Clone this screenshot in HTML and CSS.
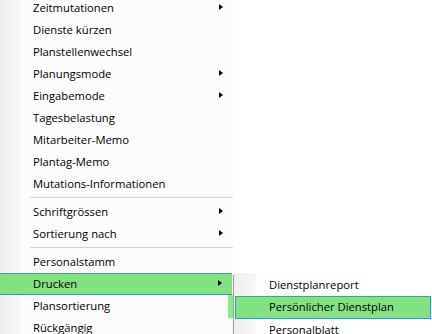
FILE: index.html
```html
<!DOCTYPE html>
<html lang="de">
<head>
    <meta charset="UTF-8">
    <title>Kontextmenü</title>
    <link rel="stylesheet" href="styles.css">
</head>
<body>
    <div class="menu">
        <div class="item has-arrow">Zeitmutationen <span class="arrow"></span></div>
        <div class="item">Dienste kürzen</div>
        <div class="item">Planstellenwechsel</div>
        <div class="item has-arrow">Planungsmode <span class="arrow"></span></div>
        <div class="item has-arrow">Eingabemode <span class="arrow"></span></div>
        <div class="item">Tagesbelastung</div>
        <div class="item">Mitarbeiter-Memo</div>
        <div class="item">Plantag-Memo</div>
        <div class="item">Mutations-Informationen</div>
        <div class="sep"></div>
        <div class="item has-arrow">Schriftgrössen <span class="arrow"></span></div>
        <div class="item has-arrow">Sortierung nach <span class="arrow"></span></div>
        <div class="sep"></div>
        <div class="item">Personalstamm</div>
        <div class="item has-arrow active open">Drucken <span class="arrow"></span>
            <div class="submenu">
                <div class="sub-item">Dienstplanreport</div>
                <div class="sub-item active">Persönlicher Dienstplan</div>
                <div class="sub-item">Personalblatt</div>
            </div>
        </div>
        <div class="item">Plansortierung</div>
        <div class="item">Rückgängig</div>
    </div>
</body>
</html>
```

FILE: styles.css
```css
* {
    margin: 0;
    padding: 0;
    box-sizing: border-box;
}
body {
    font-family: "Segoe UI", "Open Sans", sans-serif;
    font-size: 11.25px;
    color: #000;
    background-color: #fff;
    overflow: hidden;
}
.menu {
    width: 233px;
    margin-top: -3px;
    background: linear-gradient(to right, #eeeeee 0, #f7f7f7 21px, #fcfcfc 22px);
}
.item {
    position: relative;
    display: flex;
    align-items: center;
    justify-content: space-between;
    height: 22px;
    padding: 0 10px 2px 33px;
    white-space: nowrap;
}
.arrow {
    width: 0;
    height: 0;
    border-left: 4px solid #000;
    border-top: 3.5px solid transparent;
    border-bottom: 3.5px solid transparent;
}
.sep {
    margin: 2px 0 3px 30px;
    border-top: 1px solid #d4d4d4;
}
.item.active {
    background-color: #82e282;
    border: 1px solid #2f96e0;
    border-top-color: #3ea884;
    border-left: none;
}

/* submenu */
.submenu {
    position: absolute;
    left: 100%;
    top: -1px;
    width: 200px;
    padding-top: 1px;
    background: linear-gradient(to right, #f2f2f2 0, #f2f2f2 1px, #eeeeee 2px, #f7f7f7 24px, #fff 25px);
}
.submenu::before {
    content: "";
    position: absolute;
    left: 1px;
    top: 2px;
    bottom: 0;
    border-left: 1px solid #a0a0a0;
}
.sub-item {
    position: relative;
    display: flex;
    align-items: center;
    height: 22px;
    padding: 0 0 2px 37px;
    white-space: nowrap;
}
.sub-item.active {
    margin: 0 1px 0 3px;
    padding-left: 33px;
    height: 23px;
    background-color: #82e282;
    border: 1px solid #2f96e0;
    border-top-color: #3ea884;
    border-left-color: #2f9ab8;
}
.sub-item.active::before {
    content: "";
    position: absolute;
    left: -8px;
    top: -2px;
    width: 5px;
    height: 23px;
    background-color: #86ec86;
}
```
